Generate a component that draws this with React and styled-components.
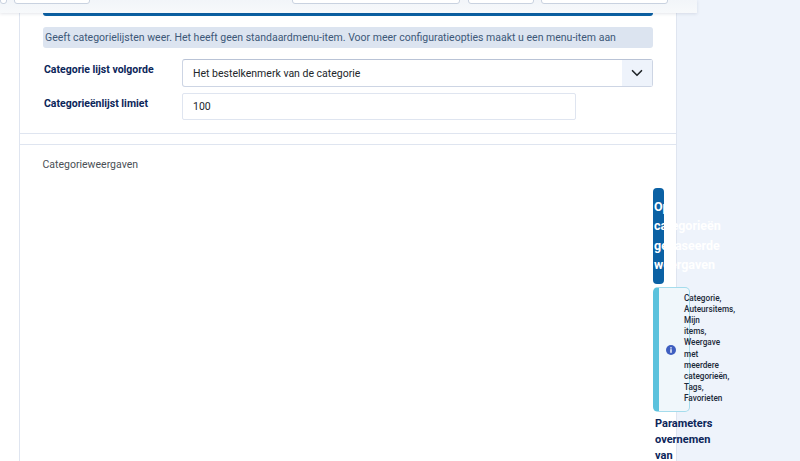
import React from 'react';
import styled, { createGlobalStyle } from 'styled-components';
import { ChevronDown } from 'lucide-react';

const GlobalStyle = createGlobalStyle`
  html, body {
    margin: 0;
    padding: 0;
    background: #eef3fb;
    font-family: Roboto, "Liberation Sans", sans-serif;
  }
`;

const Page = styled.div`
  width: 800px;
  height: 461px;
  overflow: hidden;
  background: #eef3fb;
`;

const Toolbar = styled.div`
  position: relative;
  z-index: 2;
  box-sizing: border-box;
  width: 697px;
  height: 13px;
  padding-bottom: 9px;
  display: flex;
  align-items: flex-end;
  overflow: hidden;
  background: linear-gradient(to bottom, #f2f5f9, #f7f9fb);
  box-shadow: 0 1px 3px rgba(30, 50, 90, 0.12);
`;

const ToolbarButton = styled.div`
  flex: none;
  box-sizing: border-box;
  width: ${(p) => p.$width}px;
  margin-left: ${(p) => p.$gap}px;
  height: 12px;
  background: #fff;
  border: 1px solid #c9d2e0;
  border-radius: 3px;
`;

const Main = styled.main`
  box-sizing: border-box;
  width: 677px;
  padding-left: 19px;
  background: #fff;
`;

const Card = styled.div`
  width: 658px;
  box-sizing: border-box;
  border-left: 1px solid #dfe5f0;
  border-right: 1px solid #dfe5f0;
`;

const TopSection = styled.section`
  padding: 0 23px 13px;
  border-bottom: 1px solid #dfe5f0;
`;

const AccentLine = styled.div`
  height: 3px;
  background: #0b61a4;
  border-radius: 0 0 3px 3px;
`;

const Hint = styled.p`
  margin: 11px 0 11px;
  height: 21px;
  padding-left: 2px;
  line-height: 21px;
  font-size: 10.5px;
  color: #3d5878;
  background: #dce4f0;
  border-radius: 3px;
`;

const FieldRow = styled.div`
  display: flex;
  margin-bottom: 6px;
  &:last-child {
    margin-bottom: 0;
  }
`;

const FieldLabel = styled.label`
  flex: none;
  box-sizing: border-box;
  width: 139px;
  padding: 3px 0 0 1px;
  font-size: 10.5px;
  line-height: 15px;
  font-weight: 700;
  color: #0b2559;
`;

const SelectBox = styled.div`
  box-sizing: border-box;
  flex: 1;
  height: 28px;
  display: flex;
  align-items: center;
  justify-content: space-between;
  padding-left: 10px;
  font-size: 10.5px;
  color: #22262a;
  background: #fff;
  border: 1px solid #cdd5e4;
  border-top-color: #b9c3d6;
  border-radius: 3px;
`;

const SelectArrow = styled.span`
  width: 30px;
  height: 26px;
  display: flex;
  align-items: center;
  justify-content: center;
  color: #22262a;
  background: #eef3fb;
`;

const TextInput = styled.div`
  box-sizing: border-box;
  width: 394px;
  height: 27px;
  padding-left: 10px;
  line-height: 26px;
  font-size: 10.5px;
  color: #22262a;
  background: #fff;
  border: 1px solid #dfe5f0;
  border-radius: 2px;
`;

const ViewsSection = styled.section`
  margin-top: 10px;
  padding: 13px 23px 0;
  height: 400px;
  border-top: 1px solid #dfe5f0;
`;

const SectionTitle = styled.div`
  margin-left: -0.5px;
  font-size: 10.5px;
  line-height: 14px;
  color: #4a4f55;
`;

const NarrowColumn = styled.div`
  margin: 16px 0 0 610px;
  width: 37px;
`;

const ViewsBadge = styled.div`
  box-sizing: border-box;
  width: 11px;
  height: 96px;
  padding: 9px 1px;
  font-size: 12.5px;
  font-weight: 700;
  line-height: 19.4px;
  color: #fff;
  background: #0b61a4;
  border-radius: 4px;
`;

const InfoBox = styled.div`
  box-sizing: border-box;
  margin-top: 3px;
  width: 37px;
  height: 125px;
  display: flex;
  align-items: center;
  background: #f0f7fb;
  border: 1px solid #a5dcec;
  border-left: 6px solid #5bc2dd;
  border-radius: 5px;
`;

const InfoIcon = styled.svg`
  flex: none;
  width: 10px;
  height: 10px;
  margin-left: 7px;
`;

const InfoText = styled.div`
  flex: none;
  width: 37px;
  margin: -2px 0 0 8px;
  font-size: 8.2px;
  font-weight: 500;
  line-height: 11.1px;
  color: #1c2a3a;
`;

const ParamLabel = styled.div`
  margin: 4px 0 0 2px;
  width: 60px;
  font-size: 11px;
  font-weight: 700;
  line-height: 16px;
  color: #0b2559;
`;

const App = () => (
  <Page>
    <GlobalStyle />
    <Toolbar>
      <ToolbarButton $width={7} $gap={0} />
      <ToolbarButton $width={76} $gap={7} />
      <ToolbarButton $width={168} $gap={202} />
      <ToolbarButton $width={66} $gap={8} />
      <ToolbarButton $width={127} $gap={7} />
    </Toolbar>
    <Main>
      <Card>
        <TopSection>
          <AccentLine />
          <Hint>
            Geeft categorielijsten weer. Het heeft geen standaardmenu-item. Voor meer configuratieopties maakt u een menu-item aan
          </Hint>
          <FieldRow>
            <FieldLabel>Categorie lijst volgorde</FieldLabel>
            <SelectBox>
              Het bestelkenmerk van de categorie
              <SelectArrow>
                <ChevronDown size={18} strokeWidth={2.2} />
              </SelectArrow>
            </SelectBox>
          </FieldRow>
          <FieldRow>
            <FieldLabel>Categorieënlijst limiet</FieldLabel>
            <TextInput>100</TextInput>
          </FieldRow>
        </TopSection>
        <ViewsSection>
          <SectionTitle>Categorieweergaven</SectionTitle>
          <NarrowColumn>
            <ViewsBadge>Op categorieën gebaseerde weergaven</ViewsBadge>
            <InfoBox>
              <InfoIcon viewBox="0 0 10 10">
                <circle cx="5" cy="5" r="5" fill="#3f5fc0" />
                <rect x="4.3" y="4.2" width="1.4" height="3.6" fill="#fff" />
                <rect x="4.3" y="2.2" width="1.4" height="1.3" fill="#fff" />
              </InfoIcon>
              <InfoText>
                Categorie, Auteursitems, Mijn items, Weergave met meerdere categorieën, Tags, Favorieten
              </InfoText>
            </InfoBox>
            <ParamLabel>Parameters overnemen van</ParamLabel>
          </NarrowColumn>
        </ViewsSection>
      </Card>
    </Main>
  </Page>
);

export default App;
